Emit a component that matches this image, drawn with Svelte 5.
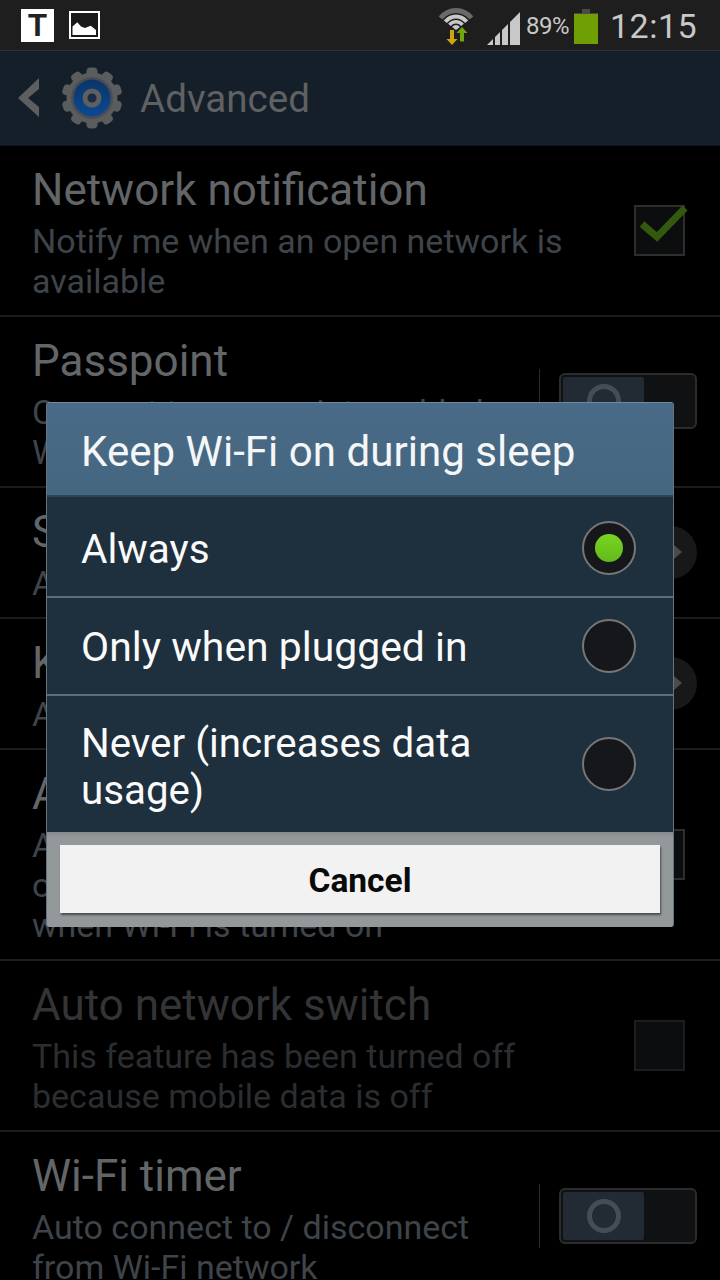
<script>
  const rows = [
    { title: 'Network notification', sub: ['Notify me when an open network is', 'available'], control: 'checked' },
    { title: 'Passpoint', sub: ['Connect to passpoint-enabled', 'Wi-Fi networks automatically'], control: 'toggle' },
    { title: 'Sort by', sub: ['Alphabetically'], control: 'arrow' },
    { title: 'Keep Wi-Fi on during sleep', sub: ['Always'], control: 'arrow' },
    { title: 'Auto connect', sub: ['Automatically connect to open', 'or saved networks', 'when Wi-Fi is turned on'], control: 'box' },
    { title: 'Auto network switch', sub: ['This feature has been turned off', 'because mobile data is off'], control: 'box', disabled: true },
    { title: 'Wi-Fi timer', sub: ['Auto connect to / disconnect', 'from Wi-Fi network'], control: 'toggle' }
  ];
  const options = [
    { label: ['Always'], on: true, cls: 'first' },
    { label: ['Only when plugged in'], on: false, cls: 'second' },
    { label: ['Never (increases data', 'usage)'], on: false, cls: 'third' }
  ];
  const teeth = Array.from({ length: 10 }, (_, i) => i * 36);

  // One band of the Wi-Fi fan, centred on (18, 27), opening 52 degrees each side.
  function band(outer, inner) {
    const s = Math.sin((52 * Math.PI) / 180);
    const c = Math.cos((52 * Math.PI) / 180);
    const p = (r, dir) => `${(18 + dir * r * s).toFixed(2)} ${(27 - r * c).toFixed(2)}`;
    return `M${p(outer, -1)} A${outer} ${outer} 0 0 1 ${p(outer, 1)} L${p(inner, 1)} A${inner} ${inner} 0 0 0 ${p(inner, -1)} Z`;
  }
</script>

<div class="screen">
  <header class="status">
    <div class="notif">
      <span class="t-icon">T</span>
      <svg class="pic" width="31" height="28" viewBox="0 0 31 28">
        <rect x="1" y="1" width="29" height="26" fill="#1a1a1a" stroke="#fff" stroke-width="2" />
        <path d="M3.500 24 V15.500 L8.300 11.300 L12 15.500 L16 17 L21.700 14.700 L27 19 V24 Z" fill="#fff" />
      </svg>
    </div>
    <div class="sys">
      <svg class="wifi" width="36" height="46" viewBox="0 0 36 46">
        <path d={band(22, 17)} fill="#6a6a6a" />
        <path d={band(15.5, 11.5)} fill="#c8c8c8" />
        <path d={band(10, 6.5)} fill="#c8c8c8" />
        <path d={band(5, 0)} fill="#c8c8c8" />
        <path d="M12 27 H16 V36 H19.500 L14 42 L8.500 36 H12 Z" fill="#c9a512" />
        <path d="M22 38.500 V30 H18.500 L24 24 L29.500 30 H26 V38.500 Z" fill="#6fa80c" />
      </svg>
      <svg class="signal" width="33" height="34" viewBox="0 0 33 34">
        <path d="M0 34 L6 28 V34 Z M8 26 L13 21 V34 H8 Z M15 19 L21 13 V34 H15 Z M23 11 L33 1 V34 H23 Z" fill="#c8c8c8" />
      </svg>
      <span class="pct">89%</span>
      <div class="battery"><i></i><b></b></div>
      <span class="clock">12:15</span>
    </div>
  </header>

  <div class="actionbar">
    <svg width="24" height="40" viewBox="0 0 24 40"><path d="M22 0 V11 L11 20 L22 29 V39 L1 20 Z" fill="#5c5e60" /></svg>
    <svg class="gear" width="62" height="62" viewBox="-31 -31 62 62">
      {#each teeth as a}
        <rect x="-5.500" y="-30.500" width="11" height="12" rx="4" fill="#5a5c5e" transform="rotate({a})" />
      {/each}
      <circle r="25.500" fill="#5a5c5e" />
      <circle r="21" fill="#4a4d51" />
      <circle r="18.500" fill="url(#blue)" />
      <circle r="9.500" fill="#5d5f61" />
      <circle r="4.500" fill="#1b2b45" />
      <defs>
        <linearGradient id="blue" x1="0" y1="0" x2="0" y2="1">
          <stop offset="0" stop-color="#0b3468" />
          <stop offset="1" stop-color="#0b4a92" />
        </linearGradient>
      </defs>
    </svg>
    <span class="heading">Advanced</span>
  </div>

  <main class="list">
    {#each rows as r}
      <section class="row" class:disabled={r.disabled}>
        <div class="text">
          <div class="title">{r.title}</div>
          {#each r.sub as line}<div class="sub">{line}</div>{/each}
        </div>
        {#if r.control === 'checked' || r.control === 'box'}
          <div class="check">
            {#if r.control === 'checked'}
              <svg class="tick" width="52" height="44" viewBox="0 0 52 44"><path d="M4 21 L19 34 L47 5" fill="none" stroke="#33590f" stroke-width="7" /></svg>
            {/if}
          </div>
        {:else if r.control === 'toggle'}
          <div class="vline"></div>
          <div class="toggle"><div class="thumb"><div class="ring"></div></div></div>
        {:else}
          <div class="arrow"><i></i></div>
        {/if}
      </section>
    {/each}
  </main>

  <div class="dialog">
    <div class="dtitle">Keep Wi-Fi on during sleep</div>
    {#each options as o}
      <div class="option {o.cls}">
        <div class="olabel">{#each o.label as l}<div>{l}</div>{/each}</div>
        <div class="radio" class:on={o.on}>{#if o.on}<i></i>{/if}</div>
      </div>
    {/each}
    <div class="footer"><div class="cancel">Cancel</div></div>
  </div>
</div>

<style>
  :global(body) { margin: 0; background: #000; }
  .screen {
    position: relative;
    width: 720px;
    height: 1280px;
    overflow: hidden;
    background: #000;
    font-family: Roboto, "Liberation Sans", sans-serif;
  }
  .status {
    height: 50px;
    background: #1e1e1e;
    display: flex;
    justify-content: space-between;
    align-items: center;
    padding: 0 24px 0 21px;
  }
  .notif { display: flex; align-items: center; gap: 15px; margin-top: 1px; }
  .t-icon {
    width: 33px;
    height: 33px;
    background: #fff;
    color: #222;
    font: 700 31px/33px "Liberation Sans", sans-serif;
    text-align: center;
  }
  .pic { display: block; margin-top: -1px; }
  .sys { display: flex; align-items: center; }
  .wifi { margin-right: 13px; margin-top: 1px; }
  .signal { margin-top: 5px; margin-right: 6px; }
  .pct { font-size: 24px; color: #c8c8c8; width: 44px; margin-top: 2px; letter-spacing: -0.500px; }
  .battery { width: 24px; margin: 0 12px 0 4px; padding-top: 3px; }
  .battery i { display: block; width: 8px; height: 4px; margin: 0 auto; background: #4a4a4a; }
  .battery b { display: block; height: 30px; background: #6f9e05; border-top: 1px solid #4a4a4a; }
  .clock { font-size: 34px; color: #c8c8c8; letter-spacing: 0.500px; margin-top: 1px; width: 86px; white-space: nowrap; }
  .actionbar {
    height: 94px;
    background: #151f29;
    border-top: 1px solid #27323c;
    border-bottom: 1px solid #10161c;
    display: flex;
    align-items: center;
    padding-left: 17px;
  }
  .gear { margin-left: 20px; margin-right: 18px; }
  .heading { font-size: 38.600px; color: #5f6163; margin-left: -1px; }
  .row {
    display: flex;
    align-items: center;
    padding: 13px 23px 14px 32px;
    border-bottom: 2px solid #1c1c1c;
  }
  .text { flex: 1; min-width: 0; padding-top: 7px; }
  .title { font-size: 44px; line-height: 48px; color: #636668; white-space: nowrap; }
  .sub { position: relative; top: 8px; font-size: 34px; line-height: 40px; color: #3e4449; white-space: nowrap; }
  .title + .sub { margin-top: -1px; }
  .sub:last-child { margin-bottom: 8px; }
  .disabled .title { color: #323436; }
  .disabled .sub { color: #2b2e31; }
  .check {
    position: relative;
    box-sizing: border-box;
    width: 51px;
    height: 51px;
    margin-right: 12px;
    background: #0c0d0e;
    border: 2px solid #2e2e2e;
  }
  .disabled .check { border-color: #1c1d1e; }
  .tick { position: absolute; left: 2px; top: -4px; }
  .vline { width: 1px; height: 64px; background: #2a2a2a; margin-right: 19px; }
  .toggle {
    box-sizing: border-box;
    width: 138px;
    height: 56px;
    padding: 2px;
    background: #101112;
    border: 2px solid #2c2c2c;
    border-radius: 6px;
  }
  .thumb {
    display: flex;
    align-items: center;
    justify-content: center;
    width: 81px;
    height: 100%;
    background: #222b33;
    border-radius: 2px;
  }
  .ring {
    box-sizing: border-box;
    width: 34px;
    height: 34px;
    border: 5px solid #434d57;
    border-radius: 50%;
  }
  .arrow {
    display: flex;
    align-items: center;
    justify-content: center;
    width: 53px;
    height: 53px;
    border-radius: 50%;
    background: #181818;
  }
  .arrow i {
    width: 0;
    height: 0;
    margin-left: 14px;
    border-left: 8px solid #4b4b4b;
    border-top: 7px solid transparent;
    border-bottom: 7px solid transparent;
  }
  .dialog {
    position: absolute;
    left: 46px;
    top: 402px;
    box-sizing: border-box;
    width: 628px;
    height: 525px;
    display: flex;
    flex-direction: column;
    border-radius: 3px;
    overflow: hidden;
    background: #1e2f3d;
    border-left: 1px solid #66747f;
    border-right: 1px solid #66747f;
  }
  .dtitle {
    height: 95px;
    box-sizing: border-box;
    line-height: 97px;
    padding-left: 34px;
    font-size: 42.100px;
    color: #f4f6f8;
    background: linear-gradient(#4a6b88, #45667f);
    border-top: 1px solid #6c8aa3;
    border-bottom: 2px solid #2d4558;
  }
  .option {
    display: flex;
    align-items: center;
    justify-content: space-between;
    padding: 0 37px 0 34px;
    box-sizing: border-box;
    font-size: 40.600px;
    color: #fafafa;
    background: #1e2f3d;
  }
  .olabel { position: relative; top: 1px; }
  .option.first { height: 101px; padding-top: 2px; border-bottom: 2px solid #5b6e7c; }
  .option.second { height: 98px; font-size: 40.900px; border-bottom: 2px solid #5b6e7c; }
  .option.third { height: 136px; line-height: 47px; font-size: 40.300px; }
  .option.third .olabel { top: 3px; }
  .radio {
    box-sizing: border-box;
    flex: none;
    width: 54px;
    height: 54px;
    display: flex;
    align-items: center;
    justify-content: center;
    border-radius: 50%;
    background: #15171a;
    border: 2px solid #777;
  }
  .radio i {
    width: 28px;
    height: 28px;
    border-radius: 50%;
    background: linear-gradient(#78d620, #64b81c);
  }
  .footer {
    flex: 1;
    padding: 13px 13px 14px;
    background: linear-gradient(#85898b, #93989b 5px);
  }
  .cancel {
    height: 68px;
    line-height: 71px;
    text-align: center;
    font-size: 33.500px;
    font-weight: 700;
    color: #0a0a0a;
    background: #f2f2f2;
    box-shadow: 1px 2px 2px rgba(0, 0, 0, 0.500);
  }
</style>
